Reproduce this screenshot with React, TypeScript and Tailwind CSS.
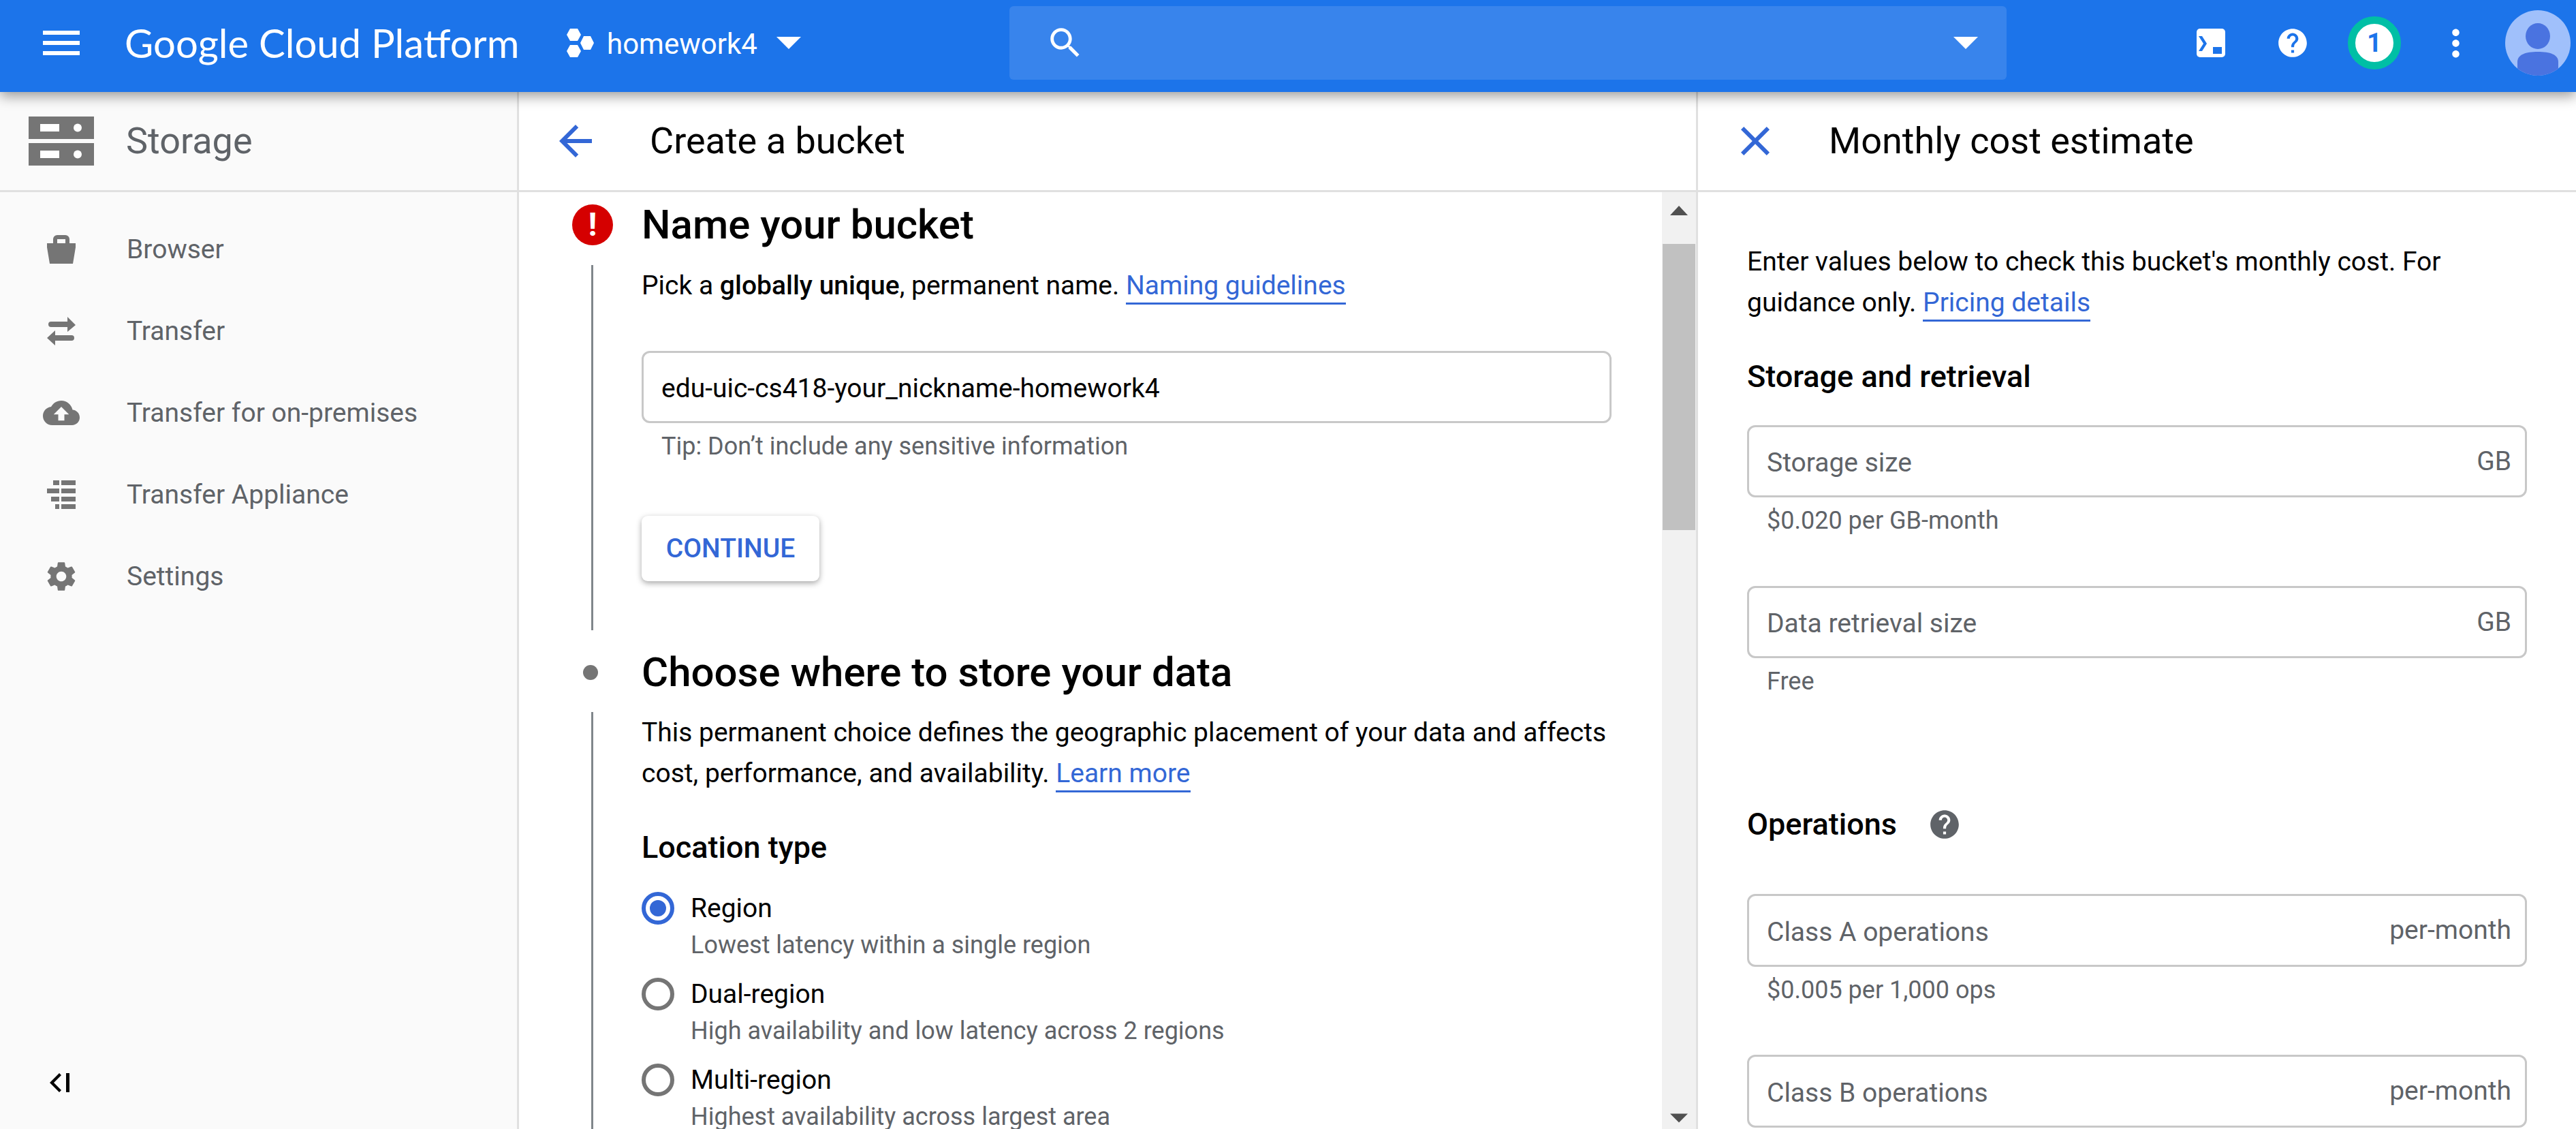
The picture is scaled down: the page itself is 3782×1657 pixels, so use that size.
import React from 'react';

const font = { fontFamily: 'Roboto, sans-serif' };

const Caret = ({ className }: { className: string }) => (
  <svg viewBox="0 0 36 18" className={className} fill="currentColor">
    <path d="M0 0h36L18 18z" />
  </svg>
);

const Icon = ({ d, className }: { d: string; className: string }) => (
  <svg viewBox="0 0 24 24" className={className} fill="currentColor">
    <path d={d} />
  </svg>
);

const HELP =
  'M12 2C6.48 2 2 6.48 2 12s4.48 10 10 10 10-4.48 10-10S17.52 2 12 2zm1 17h-2v-2h2v2zm2.07-7.75l-.9.92C13.45 12.9 13 13.5 13 15h-2v-.5c0-1.1.45-2.1 1.17-2.83l1.24-1.26c.37-.36.59-.86.59-1.41 0-1.1-.9-2-2-2s-2 .9-2 2H8c0-2.21 1.79-4 4-4s4 1.79 4 4c0 .88-.36 1.68-.93 2.25z';

const BucketIcon = () => (
  <svg viewBox="0 0 42 42" className="h-[42px] w-[42px]" fill="#757575">
    <path fillRule="evenodd" d="M9 12V6a6 6 0 0 1 6-6h12a6 6 0 0 1 6 6v6h9v6l-4 24H4L0 18v-6zM15 6v6h12V6z" />
  </svg>
);

const TransferIcon = () => (
  <svg viewBox="0 0 42 42" className="h-[42px] w-[42px]" fill="#757575">
    <path d="M6 7h24V0l12 12-12 10v-7H6a4 4 0 0 1 0-8z" />
    <path d="M36 27H12v-7L0 31l12 11v-7h24a4 4 0 0 0 0-8z" />
  </svg>
);

const TasksIcon = () => (
  <svg viewBox="0 0 42 42" className="h-[42px] w-[42px]" fill="#757575">
    <path d="M9 0h9v7H9zM21 0h21v7H21zM0 12h18v7H0zM21 12h21v7H21zM6 24h12v7H6zM21 24h21v7H21zM12 35h6v7h-6zM21 35h21v7H21z" />
  </svg>
);

const navItems = [
  { label: 'Browser', icon: <BucketIcon /> },
  { label: 'Transfer', icon: <TransferIcon /> },
  {
    label: 'Transfer for on-premises',
    icon: (
      <Icon
        className="h-[54px] w-[54px] text-[#757575]"
        d="M19.35 10.04C18.67 6.59 15.64 4 12 4 9.11 4 6.6 5.64 5.35 8.04 2.34 8.36 0 10.91 0 14c0 3.31 2.69 6 6 6h13c2.76 0 5-2.24 5-5 0-2.64-2.05-4.78-4.65-4.96zM14 13v4h-4v-4H7l5-5 5 5h-3z"
      />
    ),
  },
  { label: 'Transfer Appliance', icon: <TasksIcon /> },
  {
    label: 'Settings',
    icon: (
      <Icon
        className="h-[50px] w-[50px] text-[#757575]"
        d="M19.43 12.98c.04-.32.07-.64.07-.98s-.03-.66-.07-.98l2.11-1.65c.19-.15.24-.42.12-.64l-2-3.46c-.12-.22-.39-.3-.61-.22l-2.49 1c-.52-.4-1.08-.73-1.69-.98l-.38-2.65C14.46 2.18 14.25 2 14 2h-4c-.25 0-.46.18-.49.42l-.38 2.65c-.61.25-1.17.59-1.69.98l-2.49-1c-.23-.09-.49 0-.61.22l-2 3.46c-.13.22-.07.49.12.64l2.11 1.65c-.04.32-.07.65-.07.98s.03.66.07.98l-2.11 1.65c-.19.15-.24.42-.12.64l2 3.46c.12.22.39.3.61.22l2.49-1c.52.4 1.08.73 1.69.98l.38 2.65c.03.24.24.42.49.42h4c.25 0 .46-.18.49-.42l.38-2.65c.61-.25 1.17-.59 1.69-.98l2.49 1c.23.09.49 0 .61-.22l2-3.46c.12-.22.07-.49-.12-.64l-2.01-1.65zM12 15.5c-1.93 0-3.5-1.57-3.5-3.5s1.57-3.5 3.5-3.5 3.5 1.57 3.5 3.5-1.57 3.5-3.5 3.5z"
      />
    ),
  },
];

function Header() {
  return (
    <header className="relative z-10 flex h-[135px] shrink-0 items-center bg-[#1c74ea] pb-[9px] text-white shadow-[0_6px_18px_rgba(0,0,0,0.4)]">
      <Icon
        className="ml-[54px] h-[72px] w-[72px]"
        d="M3 18h18v-2H3v2zm0-5h18v-2H3v2zm0-7v2h18V6H3z"
      />
      <div className="ml-[57px] w-[649px] text-[58px] leading-none" style={{ fontFamily: 'Lato, sans-serif' }}>
        Google Cloud Platform
      </div>
      <svg viewBox="0 0 40 42" className="h-[42px] w-[40px]" fill="currentColor">
        <path d="M5 0h11l5 9-5 9H5L0 9zM5 24h11l5 9-5 9H5l-5-9zM25 11h10l5 10-5 10H25l-5-10z" />
      </svg>
      <div className="ml-[19px] w-[249px] pt-[3px] text-[42px] leading-none">homework4</div>
      <Caret className="h-[18px] w-[36px]" />
      <div className="ml-[306px] flex h-[108px] w-[1464px] items-center justify-between rounded-[6px] bg-[#3884ec] pr-[42px] pl-[53px]">
        <Icon
          className="h-[58px] w-[58px]"
          d="M15.5 14h-.79l-.28-.27C15.41 12.59 16 11.11 16 9.5 16 5.91 13.09 3 9.5 3S3 5.91 3 9.5 5.91 16 9.5 16c1.61 0 3.09-.59 4.23-1.57l.27.28v.79l5 4.99L20.49 19l-4.99-5zm-6 0C7.01 14 5 11.99 5 9.5S7.01 5 9.5 5 14 7.01 14 9.5 11.99 14 9.5 14z"
        />
        <Caret className="h-[18px] w-[36px]" />
      </div>
      <svg viewBox="0 0 42 42" className="ml-[279px] h-[42px] w-[42px]">
        <rect width="42" height="42" rx="5" fill="#fff" />
        <path d="M3 11h5l7 11-7 11H3l7-11z" fill="#1c74ea" />
        <rect x="24" y="27" width="13" height="10" fill="#1c74ea" />
      </svg>
      <Icon className="ml-[74px] h-[50px] w-[50px] shrink-0" d={HELP} />
      <div className="ml-[56px] flex h-[78px] w-[78px] items-center justify-center rounded-full border-[11px] border-[#00bfa5] bg-white text-[38px] font-bold text-[#1c74ea]">
        1
      </div>
      <Icon
        className="ml-[49px] h-[63px] w-[63px]"
        d="M12 8c1.1 0 2-.9 2-2s-.9-2-2-2-2 .9-2 2 .9 2 2 2zm0 2c-1.1 0-2 .9-2 2s.9 2 2 2 2-.9 2-2-.9-2-2-2zm0 6c-1.1 0-2 .9-2 2s.9 2 2 2 2-.9 2-2-.9-2-2-2z"
      />
      <svg viewBox="0 0 96 96" className="ml-[41px] h-[96px] w-[96px]">
        <clipPath id="avatar">
          <circle cx="48" cy="48" r="48" />
        </clipPath>
        <g clipPath="url(#avatar)">
          <rect width="96" height="96" fill="#a0c0fb" />
          <ellipse cx="48" cy="38" rx="18" ry="19" fill="#4a73e0" />
          <path d="M18 96V76c0-11 12-15 30-15s30 4 30 15v20z" fill="#4a73e0" />
        </g>
      </svg>
    </header>
  );
}

function Sidebar() {
  return (
    <aside className="flex w-[762px] shrink-0 flex-col border-r-[3px] border-[#e0e0e0] bg-[#fafafa] text-[#5f6368]">
      <div className="flex h-[147px] shrink-0 items-center border-b-[3px] border-[#e0e0e0]">
        <svg viewBox="0 0 96 72" className="ml-[42px] h-[72px] w-[96px]">
          <rect width="96" height="33" fill="#757575" />
          <rect y="39" width="96" height="33" fill="#757575" />
          <rect x="17" y="11" width="28" height="11" fill="#fff" />
          <rect x="17" y="50" width="28" height="11" fill="#fff" />
          <ellipse cx="72" cy="16.5" rx="6" ry="6" fill="#fff" />
          <ellipse cx="72" cy="55.5" rx="6" ry="6" fill="#fff" />
        </svg>
        <div className="ml-[47px] text-[54px] leading-none">Storage</div>
      </div>
      <nav className="pt-[24px]">
        {navItems.map((item) => (
          <div key={item.label} className="flex h-[120px] items-center">
            <div className="flex w-[180px] shrink-0 justify-center">{item.icon}</div>
            <div className="ml-[6px] text-[39px]">{item.label}</div>
          </div>
        ))}
      </nav>
      <div className="mt-auto mb-[54px] ml-[73px] text-black">
        <svg viewBox="0 0 30 28" className="block h-[28px] w-[30px]" fill="currentColor">
          <path d="M14 0l3 3L6 14l11 11-3 3L0 14zM24 0h5v28h-5z" />
        </svg>
      </div>
    </aside>
  );
}

const Toolbar = ({ icon, title, titleClass }: { icon: React.ReactNode; title: string; titleClass: string }) => (
  <div className="flex h-[147px] shrink-0 items-center border-b-[3px] border-[#e0e0e0]">
    {icon}
    <div className={`${titleClass} text-[54px] leading-none text-black`}>{title}</div>
  </div>
);

const Link = ({ children }: { children: React.ReactNode }) => (
  <span className="border-b-[3px] border-[#3367d6] pb-[2px] text-[#3367d6]">{children}</span>
);

const Radio = ({ label, desc, checked }: { label: string; desc: string; checked?: boolean }) => (
  <div className="mb-[18px] flex items-start">
    <div
      className={`flex h-[48px] w-[48px] shrink-0 items-center justify-center rounded-full border-[6px] ${
        checked ? 'border-[#3367d6]' : 'border-[#757575]'
      }`}
    >
      {checked && <div className="h-[24px] w-[24px] rounded-full bg-[#3367d6]" />}
    </div>
    <div className="ml-[24px]">
      <div className="h-[48px] text-[39px] leading-[48px] text-black">{label}</div>
      <div className="h-[60px] text-[36px] leading-[60px] text-[#5f6368]">{desc}</div>
    </div>
  </div>
);

function Main() {
  return (
    <main className="flex w-[1728px] shrink-0 flex-col">
      <Toolbar
        title="Create a bucket"
        titleClass="ml-[73px]"
        icon={
          <Icon
            className="ml-[47px] h-[72px] w-[72px] text-[#3367d6]"
            d="M20 11H7.83l5.59-5.59L12 4l-8 8 8 8 1.41-1.41L7.83 13H20v-2z"
          />
        }
      />
      <div className="flex min-h-0 flex-1">
        <div className="min-w-0 flex-1 overflow-hidden">
          <div className="mt-[18px] flex h-[60px] items-center">
            <div className="ml-[78px] flex h-[60px] w-[60px] items-center justify-center rounded-full bg-[#d50000] text-[48px] font-bold text-white">
              !
            </div>
            <h2 className="ml-[42px] text-[60px] font-medium text-black">Name your bucket</h2>
          </div>
          <div className="mt-[29px] flex h-[536px]">
            <div className="ml-[106px] w-[3px] bg-[#80868b]" />
            <div className="ml-[71px] w-[1424px]">
              <p className="h-[56px] text-[39px] leading-[60px] text-black">
                Pick a <b className="font-medium">globally unique</b>, permanent name. <Link>Naming guidelines</Link>
              </p>
              <div className="mt-[70px] flex h-[106px] items-center rounded-[12px] border-[3px] border-[#c8c8c8] pt-[4px] pl-[26px] text-[39px] text-black">
                edu-uic-cs418-your_nickname-homework4
              </div>
              <div className="h-[66px] pl-[29px] text-[36px] leading-[68px] text-[#5f6368]">
                Tip: Don’t include any sensitive information
              </div>
              <button className="mt-[70px] h-[96px] w-[261px] rounded-[9px] bg-white text-[39px] font-medium text-[#3367d6] shadow-[0_3px_9px_rgba(0,0,0,0.35)]">
                CONTINUE
              </button>
            </div>
          </div>
          <div className="mt-[32px] flex h-[60px] items-center">
            <div className="ml-[94px] h-[22px] w-[22px] rounded-full bg-[#757575]" />
            <h2 className="ml-[64px] text-[60px] font-medium text-black">Choose where to store your data</h2>
          </div>
          <div className="mt-[28px] flex">
            <div className="ml-[106px] w-[3px] bg-[#80868b]" />
            <div className="ml-[71px] w-[1424px]">
              <p className="text-[39px] leading-[60px] text-black">
                This permanent choice defines the geographic placement of your data and affects
                <br />
                cost, performance, and availability. <Link>Learn more</Link>
              </p>
              <h3 className="mt-[49px] mb-[35px] h-[60px] text-[45px] leading-[60px] font-medium text-black">
                Location type
              </h3>
              <Radio label="Region" desc="Lowest latency within a single region" checked />
              <Radio label="Dual-region" desc="High availability and low latency across 2 regions" />
              <Radio label="Multi-region" desc="Highest availability across largest area" />
            </div>
          </div>
        </div>
        <div className="flex w-[50px] shrink-0 flex-col bg-[#f1f1f1] text-[#505050]">
          <div className="flex h-[76px] shrink-0 justify-center pt-[20px]">
            <svg viewBox="0 0 26 14" className="h-[14px] w-[26px]" fill="currentColor">
              <path d="M13 0l13 14H0z" />
            </svg>
          </div>
          <div className="mx-[1px] h-[420px] shrink-0 bg-[#c1c1c1]" />
          <div className="mt-auto flex justify-center pb-[9px]">
            <Caret className="h-[14px] w-[26px]" />
          </div>
        </div>
      </div>
    </main>
  );
}

const Field = ({ label, suffix, height }: { label: string; suffix: string; height: string }) => (
  <div className={`${height} flex items-center justify-between rounded-[12px] border-[3px] border-[#c8c8c8] pr-[20px] pl-[26px] text-[#5f6368]`}>
    <span className="pt-[5px] text-[39px]">{label}</span>
    <span className="text-[39px]">{suffix}</span>
  </div>
);

const Helper = ({ children }: { children: React.ReactNode }) => (
  <div className="h-[66px] pl-[29px] text-[36px] leading-[69px] text-[#5f6368]">{children}</div>
);

function CostPanel() {
  return (
    <section className="flex min-w-0 flex-1 flex-col border-l-[3px] border-[#e0e0e0]">
      <Toolbar
        title="Monthly cost estimate"
        titleClass="ml-[72px]"
        icon={
          <Icon
            className="ml-[48px] h-[72px] w-[72px] shrink-0 text-[#3367d6]"
            d="M19 6.41L17.59 5 12 10.59 6.41 5 5 6.41 10.59 12 5 17.59 6.41 19 12 13.41 17.59 19 19 17.59 13.41 12z"
          />
        }
      />
      <div className="overflow-hidden pt-[72px] pr-[72px] pl-[72px]">
        <p className="text-[39px] leading-[60px] text-black">
          Enter values below to check this bucket's monthly cost. For
          <br />
          guidance only. <Link>Pricing details</Link>
        </p>
        <h3 className="mt-[49px] mb-[41px] h-[60px] text-[45px] leading-[60px] font-medium text-black">
          Storage and retrieval
        </h3>
        <Field label="Storage size" suffix="GB" height="h-[106px]" />
        <Helper>$0.020 per GB-month</Helper>
        <div className="mt-[64px]">
          <Field label="Data retrieval size" suffix="GB" height="h-[106px]" />
        </div>
        <Helper>Free</Helper>
        <h3 className="mt-[148px] mb-[72px] flex h-[60px] items-center text-[45px] font-medium text-black">
          Operations
          <Icon className="ml-[45px] h-[50px] w-[50px] text-[#5f6368]" d={HELP} />
        </h3>
        <Field label="Class A operations" suffix="per-month" height="h-[107px]" />
        <Helper>$0.005 per 1,000 ops</Helper>
        <div className="mt-[63px]">
          <Field label="Class B operations" suffix="per-month" height="h-[107px]" />
        </div>
      </div>
    </section>
  );
}

export default function App() {
  return (
    <div className="flex h-[1657px] w-[3782px] flex-col overflow-hidden bg-white" style={font}>
      <Header />
      <div className="flex min-h-0 flex-1">
        <Sidebar />
        <Main />
        <CostPanel />
      </div>
    </div>
  );
}
